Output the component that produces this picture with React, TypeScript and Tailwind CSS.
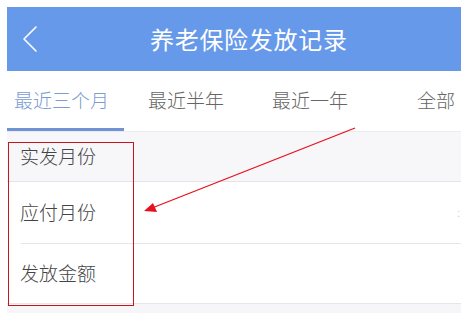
import React from "react";

export default function App() {
  const font = { fontFamily: '"Noto Sans CJK SC", "Noto Sans", sans-serif' };
  return (
    <div className="relative w-[461px] h-[313px] overflow-hidden bg-white pl-[7px] pt-[7px] font-light" style={font}>
      {/* Header */}
      <div className="h-[64px] bg-[#6699e9] flex items-center">
        <svg width="20" height="30" viewBox="0 0 20 30" className="ml-[14px] shrink-0">
          <path d="M15 3 L3 15 L15 27" fill="none" stroke="#ffffff" strokeWidth="1.6" strokeLinecap="round" strokeLinejoin="round" />
        </svg>
        <div className="ml-[109px] text-[24px] leading-none text-white tracking-[0.7px] font-normal">养老保险发放记录</div>
      </div>
      {/* Tabs */}
      <div className="h-[61px] flex flex-col border-b border-[#ececf0]">
        <div className="flex-1 flex items-center text-[19px] leading-none text-[#666666]">
          <span className="ml-[7px] text-[#7b9bd3]">最近三个月</span>
          <span className="ml-[39px]">最近半年</span>
          <span className="ml-[48px]">最近一年</span>
          <span className="ml-[69px]">全部</span>
        </div>
        <div className="w-[117px] h-[3px] bg-[#6f94d6]" />
      </div>
      {/* Rows */}
      <div className="h-[50px] bg-[#f7f7fa] flex items-center border-b border-[#e4e4e8] text-[19px] text-[#444444]">
        <span className="ml-[13px]">实发月份</span>
      </div>
      <div className="h-[61px] bg-white flex items-center relative text-[19px] text-[#444444]">
        <span className="ml-[13px]">应付月份</span>
        <span className="absolute right-[1px] text-[11px] leading-none text-[#c8c8c8]">:</span>
      </div>
      <div className="ml-[14px] h-px bg-[#e6e6ea]" />
      <div className="h-[60px] bg-white flex items-center border-b border-[#e6e6ea] text-[19px] text-[#444444]">
        <span className="ml-[13px]">发放金额</span>
      </div>
      <div className="h-[20px] bg-[#f6f6f9]" />

      {/* Annotation overlay */}
      <div className="absolute left-[8px] top-[142px] w-[126px] h-[164px] border border-[#c8141e]" />
      <svg className="absolute left-0 top-0" width="461" height="313" viewBox="0 0 461 313">
        <line x1="355" y1="128" x2="152" y2="208" stroke="#e8101c" strokeWidth="1.3" />
        <polygon points="144,211 153,203 157,212" fill="#e8101c" />
      </svg>
    </div>
  );
}
